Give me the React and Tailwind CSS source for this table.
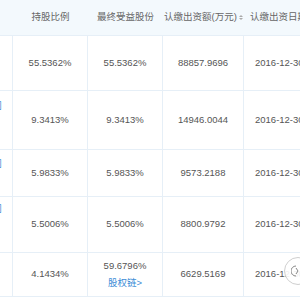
const COLS = "grid grid-cols-[13px_75px_75px_81px_90px]";

const ROWS = [
  { h: "h-[55px]", pct: "55.5362%", final: "55.5362%", amount: "88857.9696", date: "2016-12-30", link: null },
  { h: "h-[59px]", pct: "9.3413%", final: "9.3413%", amount: "14946.0044", date: "2016-12-30", link: "pt-[10px]" },
  { h: "h-[47px]", pct: "5.9833%", final: "5.9833%", amount: "9573.2188", date: "2016-12-30", link: "pt-[9px]" },
  { h: "h-[56px]", pct: "5.5006%", final: "5.5006%", amount: "8800.9792", date: "2016-12-30", link: "pt-[7px]" },
  { h: "h-[44px]", pct: "4.1434%", final: "59.6796%", amount: "6629.5169", date: "2016-12-30", link: null, chain: true },
];

function Cell({ children, last }) {
  return (
    <div className={`flex flex-col items-center justify-center ${last ? "" : "border-r border-[#e6eff7]"}`}>
      {children}
    </div>
  );
}

export default function App() {
  return (
    <div
      className="relative w-[300px] h-[300px] overflow-hidden bg-white text-[9.5px] text-[#555]"
      style={{ fontFamily: '"Liberation Sans", "Noto Sans CJK SC", sans-serif' }}
    >
      <div className="w-[334px]">
        {/* header */}
        <div className={`${COLS} h-[36px] bg-[#f3f9fd] border-b border-[#e6eff7] text-[#666]`}>
          <div />
          <div className="flex items-center justify-center">持股比例</div>
          <div className="flex items-center justify-center whitespace-nowrap">最终受益股份</div>
          <div className="flex items-center justify-center whitespace-nowrap gap-[2px]">
            认缴出资额(万元)
            <span className="flex flex-col gap-[1px]">
              <span className="w-0 h-0 border-x-[2px] border-x-transparent border-b-[2px] border-b-[#aaa]" />
              <span className="w-0 h-0 border-x-[2px] border-x-transparent border-t-[2px] border-t-[#aaa]" />
            </span>
          </div>
          <div className="flex items-center pl-[6px] whitespace-nowrap">认缴出资日期</div>
        </div>

        {ROWS.map((r, i) => (
          <div key={i} className={`${COLS} ${r.h} border-b border-[#e6eff7]`}>
            <div className="border-r border-[#e6eff7] overflow-hidden">
              {r.link && (
                <div className={`flex justify-end pr-[10px] ${r.link}`}>
                  <span className="whitespace-nowrap text-[#3d8cd6] leading-none">有限公司</span>
                </div>
              )}
            </div>
            <Cell>{r.pct}</Cell>
            <Cell>
              <span>{r.final}</span>
              {r.chain && <span className="text-[#3d8cd6] mt-[3px]">股权链&gt;</span>}
            </Cell>
            <Cell>{r.amount}</Cell>
            <div className="flex items-center pl-[11px] whitespace-nowrap">{r.date}</div>
          </div>
        ))}
      </div>

      {/* floating round button at right edge */}
      <div className="absolute left-[284px] top-[257px] w-[28px] h-[28px] rounded-full bg-white/90 border border-[#cfcfcf] flex items-center justify-center">
        <svg width="14" height="14" viewBox="0 0 14 14" fill="none" stroke="#888" strokeWidth="1">
          <path d="M5 2 A5 5 0 0 0 5 12" />
          <path d="M5 4 L7 7 L5 10" />
        </svg>
      </div>
    </div>
  );
}
